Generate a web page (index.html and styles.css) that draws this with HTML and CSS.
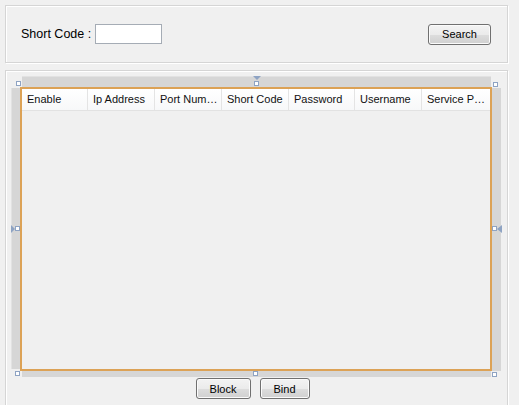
FILE: index.html
```html
<!DOCTYPE html>
<html>
<head>
<meta charset="utf-8">
<link rel="stylesheet" href="styles.css">
</head>
<body>
<div class="panel search-panel">
  <label class="lbl">Short Code :</label>
  <input class="txt" type="text">
  <div class="spacer"></div>
  <button class="btn btn-search">Search</button>
</div>
<div class="panel list-panel">
  <div class="frame">
    <div class="strip strip-top"></div>
    <div class="strip strip-left"></div>
    <div class="table">
      <div class="thead">
        <div class="th">Enable</div>
        <div class="th">Ip Address</div>
        <div class="th">Port Num…</div>
        <div class="th">Short Code</div>
        <div class="th">Password</div>
        <div class="th">Username</div>
        <div class="th">Service P…</div>
      </div>
    </div>
    <div class="strip strip-right"></div>
    <div class="strip strip-bottom"></div>

    <span class="handle h-tl"></span>
    <span class="handle h-tm"></span>
    <span class="handle h-tr"></span>
    <span class="handle h-ml"></span>
    <span class="handle h-mr"></span>
    <span class="handle h-bl"></span>
    <span class="handle h-bm"></span>
    <span class="handle h-br"></span>
    <span class="tri tri-down"></span>
    <span class="tri tri-right"></span>
    <span class="tri tri-left"></span>
  </div>
  <div class="actions">
    <button class="btn btn-block">Block</button>
    <button class="btn btn-bind">Bind</button>
  </div>
</div>
</body>
</html>
```

FILE: styles.css
```css
html, body {
  margin: 0;
  padding: 0;
  background: #f0f0f0;
  overflow: hidden;
}
body {
  padding: 5px 0 0 5px;
  font-family: "Liberation Sans", Arial, sans-serif;
  color: #000;
  width: 519px;
  height: 405px;
  box-sizing: border-box;
}
.panel {
  width: 503px;
  box-sizing: border-box;
  border: 1px solid #d5d5d5;
  box-shadow: inset 1px 1px 0 #ffffff, 1px 1px 0 #ffffff;
}
.search-panel {
  height: 58px;
  display: flex;
  align-items: center;
  padding: 0 16px 0 15px;
}
.lbl {
  font-size: 12.5px;
  margin-right: 4px;
}
.txt {
  width: 67px;
  height: 20px;
  box-sizing: border-box;
  border: 1px solid #a5acb5;
  background: #ffffff;
  margin: 0;
  padding: 0;
}
.spacer { flex: 1; }
.btn {
  font-family: "Liberation Sans", Arial, sans-serif;
  font-size: 11px;
  color: #000;
  height: 21px;
  box-sizing: border-box;
  border: 1px solid #707070;
  border-radius: 3px;
  background: linear-gradient(#f3f3f3 0%, #ebebeb 50%, #dddddd 51%, #d0d0d0 100%);
  box-shadow: inset 0 0 0 1px #fbfbfb;
  padding: 0;
  margin: 0;
}
.btn-search { width: 63px; }
.list-panel {
  margin-top: 7px;
  height: 345px;
  padding: 5px 0 0 5px;
}
.frame {
  position: relative;
  width: 491px;
  height: 301px;
  display: grid;
  grid-template-columns: 9px 472px 10px;
  grid-template-rows: 11px 284px 6px;
}
.strip { background: #d6d6d6; }
.strip-top { grid-column: 2; grid-row: 1; margin: 0 1px 0 2px; border-top: 1px solid #e2e2e2; }
.strip-left { grid-column: 1; grid-row: 2; margin: 1px 0 2px 0; border-left: 1px solid #e2e2e2; }
.strip-right { grid-column: 3; grid-row: 2; margin: 1px 1px 0 0; }
.strip-bottom { grid-column: 2; grid-row: 3; margin: 0 1px 0 2px; }
.table {
  grid-column: 2;
  grid-row: 2;
  border: 2px solid #dca256;
  background: #f0f0f0;
  box-sizing: border-box;
}
.thead {
  display: grid;
  grid-template-columns: 66px 67px 67px 67px 66px 67px 1fr;
  height: 22px;
  box-sizing: border-box;
  border-bottom: 1px solid #e2e2e2;
  background: linear-gradient(#ffffff, #f7f8f9);
}
.th {
  font-size: 11px;
  line-height: 21px;
  padding-left: 5px;
  border-right: 1px solid #e4e4e4;
  white-space: nowrap;
  overflow: hidden;
  color: #111;
}
.th:last-child { border-right: none; }
.actions {
  display: flex;
  justify-content: center;
  gap: 9px;
  padding-right: 13px;
  margin-top: 1px;
}
.btn-block { width: 55px; }
.btn-bind { width: 50px; }
.handle {
  position: absolute;
  width: 5px;
  height: 5px;
  box-sizing: border-box;
  border: 1px solid #8ea3c3;
  background: #ffffff;
}
.h-tl { left: 5px; top: 5px; }
.h-tm { left: 243px; top: 5px; }
.h-tr { left: 482px; top: 6px; }
.h-ml { left: 4px; top: 150px; }
.h-mr { left: 481px; top: 150px; }
.h-bl { left: 4px; top: 295px; }
.h-bm { left: 242px; top: 295px; }
.h-br { left: 481px; top: 296px; }
.tri {
  position: absolute;
  width: 0;
  height: 0;
}
.tri-down {
  left: 242px;
  top: 0;
  border-left: 4px solid transparent;
  border-right: 4px solid transparent;
  border-top: 4px solid #8ea3c3;
}
.tri-right {
  left: 0;
  top: 149px;
  border-top: 4px solid transparent;
  border-bottom: 4px solid transparent;
  border-left: 4px solid #8ea3c3;
}
.tri-left {
  left: 486px;
  top: 149px;
  border-top: 4px solid transparent;
  border-bottom: 4px solid transparent;
  border-right: 5px solid #8ea3c3;
}
```
